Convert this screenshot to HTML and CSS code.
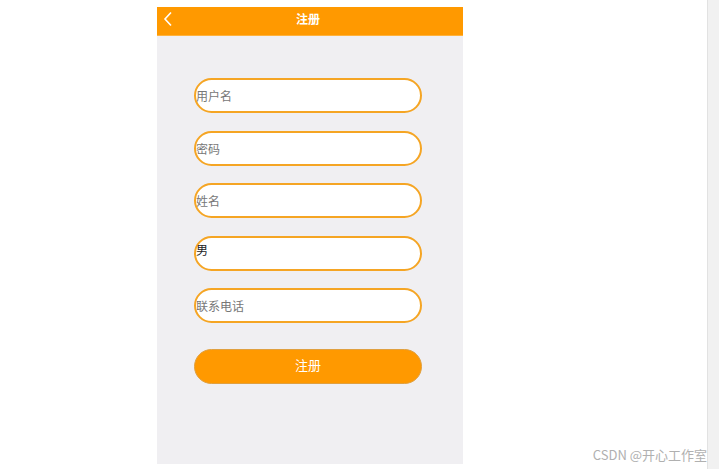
FILE: index.html
```
<!DOCTYPE html>
<html lang="zh">
<head>
<meta charset="utf-8">
<title>注册</title>
<link rel="stylesheet" href="styles.css">
</head>
<body>
<div class="page">
  <div class="phone">
    <div class="header">
      <svg class="back" width="10" height="16" viewBox="0 0 10 16"><path d="M8 1.5 L2 8 L8 14.5" fill="none" stroke="#fff" stroke-width="1.6"/></svg>
      <span class="title">注册</span>
    </div>
    <div class="form">
      <input class="field" type="text" placeholder="用户名">
      <input class="field" type="password" placeholder="密码">
      <input class="field" type="text" placeholder="姓名">
      <div class="field select">男</div>
      <input class="field" type="text" placeholder="联系电话">
      <button class="submit">注册</button>
    </div>
  </div>
  <div class="scrollbar"></div>
</div>
<div class="watermark">CSDN @开心工作室</div>
</body>
</html>
```
FILE: styles.css
```
html, body {
  margin: 0;
  padding: 0;
  background: #fff;
  font-family: "Noto Sans CJK SC", "Noto Sans", sans-serif;
}
.page {
  display: flex;
  width: 719px;
  height: 469px;
  overflow: hidden;
  position: relative;
}
.phone {
  margin: 7px 0 0 157px;
  width: 306px;
  height: 457px;
  background: #f0eff2;
  display: flex;
  flex-direction: column;
}
.header {
  height: 29px;
  background: #ff9900;
  border-bottom: 1px solid #ffb23c;
  box-sizing: border-box;
  display: flex;
  align-items: center;
  justify-content: center;
  padding-bottom: 4px;
  position: relative;
}
.back {
  position: absolute;
  left: 6px;
  top: 4px;
}
.title {
  color: #fff;
  font-size: 12px;
  font-weight: bold;
  line-height: 1;
  margin-left: -4px;
}
.form {
  display: flex;
  flex-direction: column;
  padding: 42px 0 0 37px;
  gap: 17.5px;
}
.field {
  box-sizing: border-box;
  width: 228px;
  height: 35px;
  border: 2px solid #f5a524;
  border-radius: 18px;
  background: #fff;
  padding: 0;
  margin: 0;
  font-family: "Noto Sans CJK SC", "Noto Sans", sans-serif;
  font-size: 12px;
  color: #333;
  outline: none;
}
.field::placeholder {
  color: #777;
}
.select {
  display: flex;
  align-items: center;
  padding-bottom: 8px;
  color: #222;
}
.submit {
  margin-top: 8.5px;
  box-sizing: border-box;
  width: 228px;
  height: 35px;
  border: 1px solid #e0a040;
  border-radius: 18px;
  background: #ff9900;
  color: #fff;
  font-family: "Noto Sans CJK SC", "Noto Sans", sans-serif;
  font-size: 13px;
  padding: 0 0 5px 0;
}
.scrollbar {
  margin-left: auto;
  width: 12px;
  height: 469px;
  background: #f1f1f1;
  border-left: 1px solid #e2e2e2;
  box-sizing: border-box;
}
.watermark {
  position: absolute;
  right: 12px;
  top: 446px;
  font-size: 13px;
  color: #b0b0b0;
  font-family: "Noto Sans CJK SC", sans-serif;
  line-height: 18px;
}
```
